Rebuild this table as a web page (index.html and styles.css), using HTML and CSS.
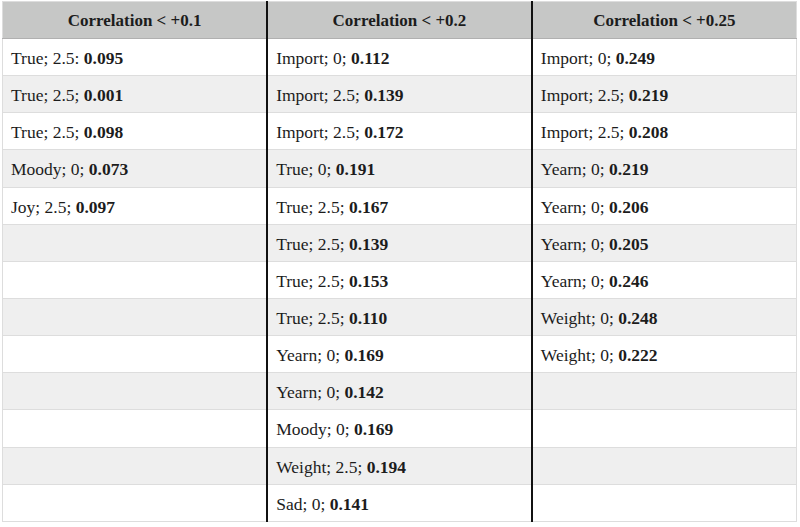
FILE: index.html
```html
<!DOCTYPE html>
<html>
<head>
<meta charset="utf-8">
<link rel="stylesheet" href="styles.css">
</head>
<body>
<table class="corr">
  <thead>
    <tr>
      <th class="sep">Correlation &lt; +0.1</th>
      <th class="sep">Correlation &lt; +0.2</th>
      <th>Correlation &lt; +0.25</th>
    </tr>
  </thead>
  <tbody>
    <tr><td class="sep">True; 2.5: <b>0.095</b></td><td class="sep">Import; 0; <b>0.112</b></td><td>Import; 0; <b>0.249</b></td></tr>
    <tr><td class="sep">True; 2.5; <b>0.001</b></td><td class="sep">Import; 2.5; <b>0.139</b></td><td>Import; 2.5; <b>0.219</b></td></tr>
    <tr><td class="sep">True; 2.5; <b>0.098</b></td><td class="sep">Import; 2.5; <b>0.172</b></td><td>Import; 2.5; <b>0.208</b></td></tr>
    <tr><td class="sep">Moody; 0; <b>0.073</b></td><td class="sep">True; 0; <b>0.191</b></td><td>Yearn; 0; <b>0.219</b></td></tr>
    <tr><td class="sep">Joy; 2.5; <b>0.097</b></td><td class="sep">True; 2.5; <b>0.167</b></td><td>Yearn; 0; <b>0.206</b></td></tr>
    <tr><td class="sep"></td><td class="sep">True; 2.5; <b>0.139</b></td><td>Yearn; 0; <b>0.205</b></td></tr>
    <tr><td class="sep"></td><td class="sep">True; 2.5; <b>0.153</b></td><td>Yearn; 0; <b>0.246</b></td></tr>
    <tr><td class="sep"></td><td class="sep">True; 2.5; <b>0.110</b></td><td>Weight; 0; <b>0.248</b></td></tr>
    <tr><td class="sep"></td><td class="sep">Yearn; 0; <b>0.169</b></td><td>Weight; 0; <b>0.222</b></td></tr>
    <tr><td class="sep"></td><td class="sep">Yearn; 0; <b>0.142</b></td><td></td></tr>
    <tr><td class="sep"></td><td class="sep">Moody; 0; <b>0.169</b></td><td></td></tr>
    <tr><td class="sep"></td><td class="sep">Weight; 2.5; <b>0.194</b></td><td></td></tr>
    <tr><td class="sep"></td><td class="sep">Sad; 0; <b>0.141</b></td><td></td></tr>
  </tbody>
</table>
</body>
</html>
```
FILE: styles.css
```css
html, body {
  margin: 0;
  padding: 0;
  background: #ffffff;
}
body {
  padding: 1px 3px 0 2px;
  font-family: "Liberation Serif", "DejaVu Serif", serif;
  color: #1c1c1c;
}
.corr {
  width: 795px;
  border-collapse: collapse;
  table-layout: fixed;
  font-size: 17.5px;
}
.corr th, .corr td {
  border: 1px solid #dddddd;
  padding: 0 0 0 8px;
  text-align: left;
  vertical-align: middle;
  line-height: 20px;
}
.corr th {
  height: 36px;
  background: #c6c7c6;
  text-align: center;
  font-weight: bold;
  font-size: 17px;
  padding: 1px 0 0 0;
  height: 35px;
  border-bottom: 1px solid #b0b0b0;
}
.corr td {
  height: 34.15px;
  padding-top: 2px;
}
.corr tbody tr:nth-child(even) td {
  background: #efefef;
}
.corr .sep {
  border-right: 2px solid #111111;
}
.corr b {
  font-weight: bold;
}
```
